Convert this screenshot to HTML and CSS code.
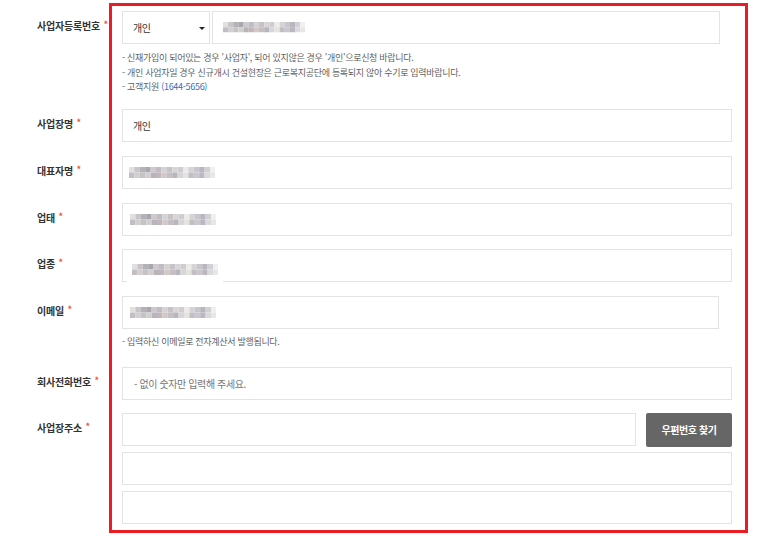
FILE: index.html
```html
<!DOCTYPE html>
<html lang="ko">
<head>
<meta charset="utf-8">
<title>사업자 정보</title>
<link rel="stylesheet" href="styles.css">
</head>
<body>
<svg class="defs" width="0" height="0" aria-hidden="true">
  <defs>
    <symbol id="mosaic" viewBox="0 0 86 11">
      <rect x="0" y="0" width="5.4" height="5.5" fill="#e2dfe0"/>
      <rect x="5.4" y="0" width="5.4" height="5.5" fill="#c9c4c8"/>
      <rect x="10.8" y="0" width="5.4" height="5.5" fill="#b4b1b8"/>
      <rect x="16.2" y="0" width="5.4" height="5.5" fill="#a9a6ad"/>
      <rect x="21.6" y="0" width="5.4" height="5.5" fill="#cdc9cd"/>
      <rect x="27" y="0" width="5.4" height="5.5" fill="#bfbcc3"/>
      <rect x="32.4" y="0" width="5.4" height="5.5" fill="#d5d2d4"/>
      <rect x="37.8" y="0" width="5.4" height="5.5" fill="#c6c2c6"/>
      <rect x="43.2" y="0" width="5.4" height="5.5" fill="#d9d5d5"/>
      <rect x="48.6" y="0" width="5.4" height="5.5" fill="#cfccd2"/>
      <rect x="54" y="0" width="5.4" height="5.5" fill="#ecebe8"/>
      <rect x="59.4" y="0" width="5.4" height="5.5" fill="#d6d3d6"/>
      <rect x="64.8" y="0" width="5.4" height="5.5" fill="#c8c5cb"/>
      <rect x="70.2" y="0" width="5.4" height="5.5" fill="#b9b6bf"/>
      <rect x="75.6" y="0" width="5.4" height="5.5" fill="#d2cfd5"/>
      <rect x="81" y="0" width="5" height="5.5" fill="#f1f0f0"/>
      <rect x="0" y="5.5" width="5.4" height="5.5" fill="#c3bec4"/>
      <rect x="5.4" y="5.5" width="5.4" height="5.5" fill="#d3ced0"/>
      <rect x="10.8" y="5.5" width="5.4" height="5.5" fill="#c5c3c4"/>
      <rect x="16.2" y="5.5" width="5.4" height="5.5" fill="#d2cfcf"/>
      <rect x="21.6" y="5.5" width="5.4" height="5.5" fill="#b9b3bb"/>
      <rect x="27" y="5.5" width="5.4" height="5.5" fill="#c0b6bb"/>
      <rect x="32.4" y="5.5" width="5.4" height="5.5" fill="#d2c8c6"/>
      <rect x="37.8" y="5.5" width="5.4" height="5.5" fill="#c4bfc5"/>
      <rect x="43.2" y="5.5" width="5.4" height="5.5" fill="#b8b5bd"/>
      <rect x="48.6" y="5.5" width="5.4" height="5.5" fill="#d8d6d8"/>
      <rect x="54" y="5.5" width="5.4" height="5.5" fill="#e4e3e0"/>
      <rect x="59.4" y="5.5" width="5.4" height="5.5" fill="#c2bfc4"/>
      <rect x="64.8" y="5.5" width="5.4" height="5.5" fill="#cbc7cd"/>
      <rect x="70.2" y="5.5" width="5.4" height="5.5" fill="#bcb7c2"/>
      <rect x="75.6" y="5.5" width="5.4" height="5.5" fill="#dcd9dd"/>
      <rect x="81" y="5.5" width="5" height="5.5" fill="#e9e6e6"/>
    </symbol>
  </defs>
</svg>

<div class="page">
  <div class="row">
    <div class="label">사업자등록번호 <span class="req">*</span></div>
    <div class="field">
      <div class="inline">
        <div class="box select">개인<span class="caret"></span></div>
        <div class="box bizno"><svg class="mosaic m-first"><use href="#mosaic"/></svg></div>
      </div>
      <ul class="hint">
        <li>- 신재가입이 되어있는 경우 '사업자', 되어 있지않은 경우 '개인'으로신청 바랍니다.</li>
        <li>- 개인 사업자일 경우 신규개시 건설현장은 근로복지공단에 등록되지 않아 수기로 입력바랍니다.</li>
        <li>- 고객지원 <span class="link">(1644-5656)</span></li>
      </ul>
    </div>
  </div>

  <div class="row r2">
    <div class="label">사업장명 <span class="req">*</span></div>
    <div class="field"><div class="box full">개인</div></div>
  </div>

  <div class="row r3">
    <div class="label">대표자명 <span class="req">*</span></div>
    <div class="field"><div class="box full pad7"><svg class="mosaic"><use href="#mosaic"/></svg></div></div>
  </div>

  <div class="row r3">
    <div class="label">업태 <span class="req">*</span></div>
    <div class="field"><div class="box full pad8"><svg class="mosaic"><use href="#mosaic"/></svg></div></div>
  </div>

  <div class="row r3">
    <div class="label">업종 <span class="req">*</span></div>
    <div class="field"><div class="box full jong"><div class="patch"><svg class="mosaic"><use href="#mosaic"/></svg></div></div></div>
  </div>

  <div class="row r3">
    <div class="label">이메일 <span class="req">*</span></div>
    <div class="field">
      <div class="box email pad8"><svg class="mosaic"><use href="#mosaic"/></svg></div>
      <ul class="hint hint-mail"><li>- 입력하신 이메일로 전자계산서 발행됩니다.</li></ul>
    </div>
  </div>

  <div class="row r7">
    <div class="label">회사전화번호 <span class="req">*</span></div>
    <div class="field"><div class="box full placeholder">- 없이 숫자만 입력해 주세요.</div></div>
  </div>

  <div class="row r8">
    <div class="label">사업장주소 <span class="req">*</span></div>
    <div class="field addr">
      <div class="inline addr-top">
        <div class="box zip"></div>
        <button class="btn" type="button">우편번호 찾기</button>
      </div>
      <div class="box full"></div>
      <div class="box full"></div>
    </div>
  </div>
</div>

<div class="frame"></div>
</body>
</html>
```

FILE: styles.css
```css
* { box-sizing: border-box; }

html, body {
  margin: 0;
  padding: 0;
  background: #fff;
}

body {
  font-family: "Noto Sans CJK KR", "Noto Sans", sans-serif;
  color: #333;
  position: relative;
  width: 763px;
  height: 547px;
  overflow: hidden;
}

.defs { position: absolute; }

.page {
  padding: 11px 0 0 37px;
}

.row {
  display: flex;
  align-items: flex-start;
}

.r2 { margin-top: 14.5px; }
.r3 { margin-top: 13.75px; }
.r7 { margin-top: 17px; }
.r8 { margin-top: 13px; }

.label {
  width: 85px;
  flex: none;
  padding-top: 7px;
  font-size: 10px;
  line-height: 16px;
  font-weight: bold;
  letter-spacing: -0.2px;
  color: #333;
  white-space: nowrap;
}

.req {
  color: #f0502f;
  font-size: 9px;
  vertical-align: top;
  position: relative;
  top: -1px;
  margin-left: 1px;
}

.field {
  width: 610px;
  flex: none;
}

.inline {
  display: flex;
  align-items: flex-start;
}

.box {
  height: 33px;
  border: 1px solid #e3e3e3;
  background: #fff;
  display: flex;
  align-items: center;
  padding-left: 10px;
  font-size: 10px;
  letter-spacing: -0.4px;
  color: #333;
}

.full { width: 610px; }

.select {
  width: 88px;
  position: relative;
  padding-left: 10px;
}

.caret {
  position: absolute;
  right: 4px;
  top: 15px;
  width: 0;
  height: 0;
  border-left: 3px solid transparent;
  border-right: 3px solid transparent;
  border-top: 3px solid #222;
}

.bizno {
  width: 508px;
  margin-left: 2px;
  padding-left: 8px;
}

.mosaic {
  width: 86px;
  height: 11px;
  display: block;
}

.m-first { height: 10.5px; }

.pad7 { padding-left: 6px; }
.pad8 { padding-left: 7px; }

.jong {
  position: relative;
}

.patch {
  position: absolute;
  left: 4px;
  top: 4px;
  width: 96px;
  height: 30px;
  background: #fff;
  padding: 10px 0 0 5px;
}

.email { width: 597px; }

.hint {
  list-style: none;
  margin: 7px 0 0;
  padding: 0;
  font-size: 9px;
  line-height: 14.5px;
  letter-spacing: -0.3px;
  color: #5f5f5f;
}

.hint-mail { margin-top: 6px; }

.link { color: #2f6fc0; }

.placeholder {
  color: #777;
  padding-left: 11px;
}

.addr .box + .box { margin-top: 6px; }
.addr-top + .box { margin-top: 5px; }

.zip { width: 514px; }

.btn {
  margin-left: 10px;
  width: 86px;
  height: 34px;
  border: 0;
  border-radius: 2px;
  background: #666;
  color: #fff;
  font-family: inherit;
  font-weight: bold;
  font-size: 10px;
  letter-spacing: -0.4px;
  padding: 0;
}

.frame {
  position: absolute;
  left: 109px;
  top: 3px;
  width: 639px;
  height: 530px;
  border: 3px solid #ea1d25;
  pointer-events: none;
}
```
